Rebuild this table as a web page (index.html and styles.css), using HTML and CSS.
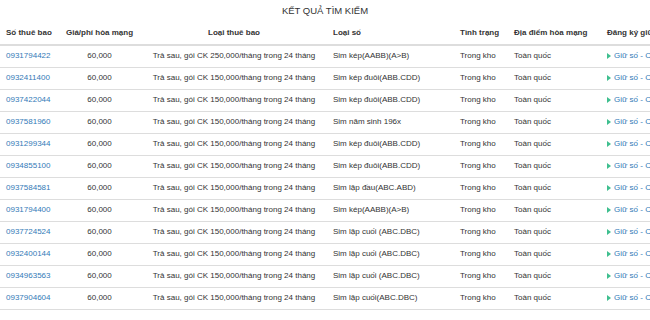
FILE: index.html
```html
<!DOCTYPE html>
<html lang="vi">
<head>
<meta charset="utf-8">
<title>Kết quả tìm kiếm</title>
<link rel="stylesheet" href="styles.css">
</head>
<body>
<div class="page">
  <h2 class="title">KẾT QUẢ TÌM KIẾM</h2>
  <table class="results">
    <colgroup>
      <col class="c1"><col class="c2"><col class="c3"><col class="c4"><col class="c5"><col class="c6"><col class="c7">
    </colgroup>
    <thead>
      <tr>
        <th>Số thuê bao</th>
        <th class="center">Giá/phí hòa mạng</th>
        <th class="center">Loại thuê bao</th>
        <th>Loại số</th>
        <th>Tình trạng</th>
        <th>Địa điểm hòa mạng</th>
        <th>Đăng ký giữ số</th>
      </tr>
    </thead>
    <tbody>
      <tr><td><a href="#">0931794422</a></td><td class="center">60,000</td><td class="center">Trả sau, gói CK 250,000/tháng trong 24 tháng</td><td>Sim kép(AABB)(A&gt;B)</td><td>Trong kho</td><td>Toàn quốc</td><td><a href="#" class="hold"><span class="arrow"></span>Giữ số - Chọn</a></td></tr>
      <tr><td><a href="#">0932411400</a></td><td class="center">60,000</td><td class="center">Trả sau, gói CK 150,000/tháng trong 24 tháng</td><td>Sim kép đuôi(ABB.CDD)</td><td>Trong kho</td><td>Toàn quốc</td><td><a href="#" class="hold"><span class="arrow"></span>Giữ số - Chọn</a></td></tr>
      <tr><td><a href="#">0937422044</a></td><td class="center">60,000</td><td class="center">Trả sau, gói CK 150,000/tháng trong 24 tháng</td><td>Sim kép đuôi(ABB.CDD)</td><td>Trong kho</td><td>Toàn quốc</td><td><a href="#" class="hold"><span class="arrow"></span>Giữ số - Chọn</a></td></tr>
      <tr><td><a href="#">0937581960</a></td><td class="center">60,000</td><td class="center">Trả sau, gói CK 150,000/tháng trong 24 tháng</td><td>Sim năm sinh 196x</td><td>Trong kho</td><td>Toàn quốc</td><td><a href="#" class="hold"><span class="arrow"></span>Giữ số - Chọn</a></td></tr>
      <tr><td><a href="#">0931299344</a></td><td class="center">60,000</td><td class="center">Trả sau, gói CK 150,000/tháng trong 24 tháng</td><td>Sim kép đuôi(ABB.CDD)</td><td>Trong kho</td><td>Toàn quốc</td><td><a href="#" class="hold"><span class="arrow"></span>Giữ số - Chọn</a></td></tr>
      <tr><td><a href="#">0934855100</a></td><td class="center">60,000</td><td class="center">Trả sau, gói CK 150,000/tháng trong 24 tháng</td><td>Sim kép đuôi(ABB.CDD)</td><td>Trong kho</td><td>Toàn quốc</td><td><a href="#" class="hold"><span class="arrow"></span>Giữ số - Chọn</a></td></tr>
      <tr><td><a href="#">0937584581</a></td><td class="center">60,000</td><td class="center">Trả sau, gói CK 150,000/tháng trong 24 tháng</td><td>Sim lặp đầu(ABC.ABD)</td><td>Trong kho</td><td>Toàn quốc</td><td><a href="#" class="hold"><span class="arrow"></span>Giữ số - Chọn</a></td></tr>
      <tr><td><a href="#">0931794400</a></td><td class="center">60,000</td><td class="center">Trả sau, gói CK 150,000/tháng trong 24 tháng</td><td>Sim kép(AABB)(A&gt;B)</td><td>Trong kho</td><td>Toàn quốc</td><td><a href="#" class="hold"><span class="arrow"></span>Giữ số - Chọn</a></td></tr>
      <tr><td><a href="#">0937724524</a></td><td class="center">60,000</td><td class="center">Trả sau, gói CK 150,000/tháng trong 24 tháng</td><td>Sim lặp cuối (ABC.DBC)</td><td>Trong kho</td><td>Toàn quốc</td><td><a href="#" class="hold"><span class="arrow"></span>Giữ số - Chọn</a></td></tr>
      <tr><td><a href="#">0932400144</a></td><td class="center">60,000</td><td class="center">Trả sau, gói CK 150,000/tháng trong 24 tháng</td><td>Sim lặp cuối (ABC.DBC)</td><td>Trong kho</td><td>Toàn quốc</td><td><a href="#" class="hold"><span class="arrow"></span>Giữ số - Chọn</a></td></tr>
      <tr><td><a href="#">0934963563</a></td><td class="center">60,000</td><td class="center">Trả sau, gói CK 150,000/tháng trong 24 tháng</td><td>Sim lặp cuối (ABC.DBC)</td><td>Trong kho</td><td>Toàn quốc</td><td><a href="#" class="hold"><span class="arrow"></span>Giữ số - Chọn</a></td></tr>
      <tr><td><a href="#">0937904604</a></td><td class="center">60,000</td><td class="center">Trả sau, gói CK 150,000/tháng trong 24 tháng</td><td>Sim lặp cuối(ABC.DBC)</td><td>Trong kho</td><td>Toàn quốc</td><td><a href="#" class="hold"><span class="arrow"></span>Giữ số - Chọn</a></td></tr>
    </tbody>
  </table>
</div>
</body>
</html>
```
FILE: styles.css
```css
html, body {
  margin: 0;
  padding: 0;
  background: #fff;
}
body {
  font-family: "Liberation Sans", Arial, sans-serif;
  color: #333;
  font-size: 8px;
}
.page {
  width: 650px;
  height: 320px;
  overflow: hidden;
}
.title {
  margin: 0;
  padding-top: 5px;
  height: 18px;
  font-size: 9.5px;
  font-weight: normal;
  line-height: 12px;
  text-align: center;
  color: #333;
}
.results {
  width: 720px;
  table-layout: fixed;
  border-collapse: collapse;
}
.c1 { width: 58px; }
.c2 { width: 83px; }
.c3 { width: 186px; }
.c4 { width: 127px; }
.c5 { width: 54px; }
.c6 { width: 93px; }
.c7 { width: 119px; }
.results th,
.results td {
  height: 10px;
  padding: 5px 6px 6px;
  line-height: 10px;
  text-align: left;
  white-space: nowrap;
  overflow: hidden;
  vertical-align: middle;
}
.results th {
  font-weight: bold;
  border-bottom: 2px solid #ddd;
}
.results td {
  border-bottom: 1px solid #ddd;
}
.results .center {
  text-align: center;
}
.results a {
  color: #337ab7;
  text-decoration: none;
}
.hold {
  display: inline-block;
  line-height: 10px;
}
.arrow {
  display: inline-block;
  width: 0;
  height: 0;
  border-top: 3.5px solid transparent;
  border-bottom: 3.5px solid transparent;
  border-left: 4px solid #3fbf8f;
  margin-right: 3px;
  vertical-align: -0.5px;
}
```
